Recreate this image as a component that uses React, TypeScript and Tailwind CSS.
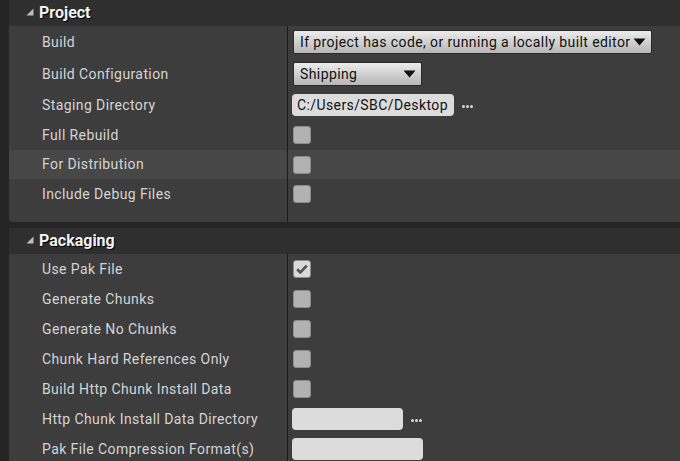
import React from "react";

type Row =
  | { label: string; kind: "dropdown"; value: string; w: string; h?: string }
  | { label: string; kind: "path"; value: string; w: string; dots?: boolean; h?: string }
  | { label: string; kind: "check"; checked?: boolean; hi?: boolean; h?: string };

const project: Row[] = [
  { label: "Build", kind: "dropdown", value: "If project has code, or running a locally built editor", w: "w-[359px]", h: "h-[32px]" },
  { label: "Build Configuration", kind: "dropdown", value: "Shipping", w: "w-[129px]", h: "h-[32px]" },
  { label: "Staging Directory", kind: "path", value: "C:/Users/SBC/Desktop", w: "w-[162px]", dots: true },
  { label: "Full Rebuild", kind: "check" },
  { label: "For Distribution", kind: "check", hi: true, h: "h-[29px]" },
  { label: "Include Debug Files", kind: "check" },
];

const packaging: Row[] = [
  { label: "Use Pak File", kind: "check", checked: true },
  { label: "Generate Chunks", kind: "check" },
  { label: "Generate No Chunks", kind: "check" },
  { label: "Chunk Hard References Only", kind: "check" },
  { label: "Build Http Chunk Install Data", kind: "check" },
  { label: "Http Chunk Install Data Directory", kind: "path", value: "", w: "w-[111px]", dots: true },
  { label: "Pak File Compression Format(s)", kind: "path", value: "", w: "w-[131px]" },
];

function Dots() {
  return (
    <div className="ml-[8px] mt-[3px] flex gap-[1px]">
      <span className="h-[3px] w-[3px] rounded-full bg-[#d8d8d8]" />
      <span className="h-[3px] w-[3px] rounded-full bg-[#d8d8d8]" />
      <span className="h-[3px] w-[3px] rounded-full bg-[#d8d8d8]" />
    </div>
  );
}

function Value({ row }: { row: Row }) {
  if (row.kind === "dropdown") {
    return (
      <div
        className={`ml-[5px] flex h-[24px] ${row.w} items-center justify-between rounded-[2px] border border-[#2a2a2a] bg-gradient-to-b from-[#ececec] to-[#b6b6b6] pl-[6px] pr-[5px] text-[14px] tracking-[0.4px] text-[#111]`}
      >
        <span className="whitespace-nowrap">{row.value}</span>
        <svg width="13" height="8" viewBox="0 0 13 8">
          <path d="M0.5 0.5 H12.5 L6.5 7.5 Z" fill="#111" />
        </svg>
      </div>
    );
  }
  if (row.kind === "path") {
    return (
      <div className="ml-[4px] flex items-center">
        <div
          className={`flex h-[22px] ${row.w} items-center rounded-[4px] bg-[#dcdcdc] px-[5px] text-[14px] tracking-[0.4px] text-[#111]`}
        >
          <span className="whitespace-nowrap">{row.value}</span>
        </div>
        {row.dots && <Dots />}
      </div>
    );
  }
  return (
    <div
      className={`ml-[5px] flex h-[18px] w-[18px] items-center justify-center rounded-[3px] border border-[#8c8c8c] ${
        row.checked ? "bg-[#dadada]" : "bg-[#b2b2b2]"
      }`}
    >
      {row.checked && (
        <svg width="12" height="10" viewBox="0 0 12 10">
          <path d="M1.2 5.2 L4.4 8.4 L10.8 1.6" stroke="#555" strokeWidth="2.8" fill="none" strokeLinejoin="round" />
        </svg>
      )}
    </div>
  );
}

function Section({ title, rows, padBottom }: { title: string; rows: Row[]; padBottom?: boolean }) {
  return (
    <div className="overflow-hidden rounded-bl-[4px] bg-[#3d3d3d]">
      <div className="flex h-[26px] items-center bg-[#2f2f2f] pl-[17px]">
        <svg width="8" height="8" viewBox="0 0 8 8" className="mr-[5px] mt-[-2px]">
          <path d="M7.5 0.5 V7.5 H0.5 Z" fill="#bdbdbd" />
        </svg>
        <span className="text-[16px] font-bold text-[#f2f2f2] [text-shadow:1px_1px_0_#000]">{title}</span>
      </div>
      {rows.map((r) => (
        <div
          key={r.label}
          className={`flex items-center ${r.h ?? "h-[30px]"} ${r.kind === "check" && r.hi ? "bg-[#474747]" : ""}`}
        >
          <div className="w-[278px] pl-[33px] text-[14px] tracking-[0.4px] text-[#d4d4d4]">{r.label}</div>
          <div className="flex h-full items-center border-l border-[#1b1b1b]">
            <Value row={r} />
          </div>
        </div>
      ))}
      {padBottom && (
        <div className="flex h-[13px]">
          <div className="w-[278px]" />
          <div className="border-l border-[#1b1b1b]" />
        </div>
      )}
    </div>
  );
}

export default function App() {
  return (
    <div className="h-[461px] w-[680px] overflow-hidden bg-[#252525] pl-[9px] font-['Roboto',sans-serif]">
      <Section title="Project" rows={project} padBottom />
      <div className="h-[6px]" />
      <Section title="Packaging" rows={packaging} />
    </div>
  );
}
